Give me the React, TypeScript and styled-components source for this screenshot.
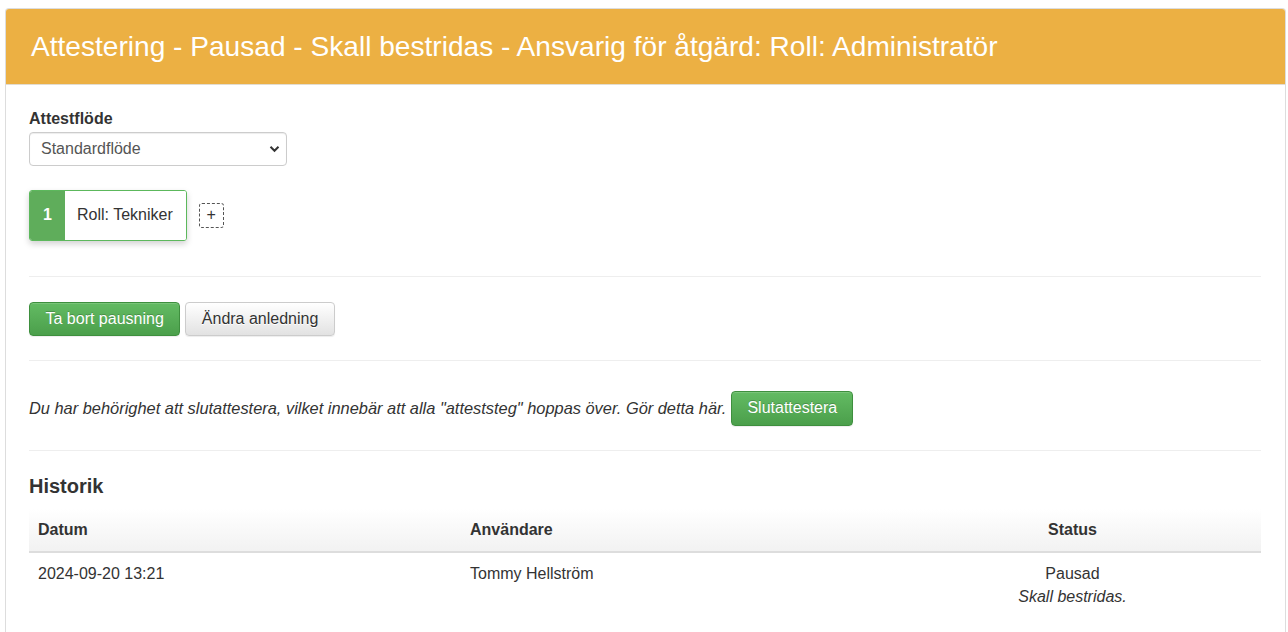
import * as React from 'react';
import styled, { createGlobalStyle } from 'styled-components';

const GlobalStyle = createGlobalStyle`
  html, body {
    margin: 0;
    padding: 0;
    background: #fff;
  }
  body {
    font-family: "Liberation Sans", Arial, Helvetica, sans-serif;
    font-size: 16px;
    line-height: 1.42857;
    color: #333;
  }
  * {
    box-sizing: border-box;
  }
`;

const Page = styled.div`
  padding: 8px 2px 0 5px;
`;

const Panel = styled.section`
  border: 1px solid #ddd;
  border-bottom: none;
  border-radius: 4px 4px 0 0;
  background: #fff;
`;

const PanelHeading = styled.header`
  background: #ecb043;
  border-bottom: 1px solid #e2dcd0;
  border-radius: 3px 3px 0 0;
  padding: 22px 25px 21px;
`;

const Title = styled.h1`
  margin: 0;
  font-size: 28.1px;
  font-weight: 400;
  line-height: 32px;
  color: #fff;
`;

const PanelBody = styled.div`
  padding: 23px 24px 20px 23px;
`;

const Label = styled.label`
  display: block;
  font-weight: 700;
  margin-bottom: 1px;
`;

const SelectWrap = styled.div`
  position: relative;
  width: 258px;
`;

const Select = styled.select`
  appearance: none;
  width: 100%;
  height: 34px;
  padding: 5px 30px 5px 11px;
  font: inherit;
  font-size: 16px;
  color: #555;
  background: #fff;
  border: 1px solid #ccc;
  border-radius: 4px;
  box-shadow: inset 0 1px 1px rgba(0, 0, 0, 0.075);
`;

const Chevron = styled.svg`
  position: absolute;
  right: 7px;
  top: 13px;
  pointer-events: none;
`;

const Steps = styled.div`
  display: flex;
  align-items: center;
  gap: 12px;
  margin-top: 24px;
`;

const StepCard = styled.div`
  display: flex;
  height: 51px;
  border: 1px solid #5cb85c;
  border-radius: 3px;
  overflow: hidden;
  box-shadow: 0 3px 6px rgba(0, 0, 0, 0.18);
`;

const StepNumber = styled.div`
  width: 35px;
  background: #5fad5b;
  color: #fff;
  font-weight: 700;
  display: flex;
  align-items: center;
  justify-content: center;
`;

const StepName = styled.div`
  display: flex;
  align-items: center;
  padding: 0 13px 0 12px;
  background: #fff;
`;

const AddStep = styled.button`
  width: 25px;
  height: 25px;
  padding: 0;
  border: 1px dashed #555;
  border-radius: 3px;
  background: #fff;
  color: #333;
  font: inherit;
  font-size: 16px;
  line-height: 1;
`;

const Divider = styled.hr<{ $top: number; $bottom: number }>`
  border: 0;
  border-top: 1px solid #eee;
  margin: ${(p) => p.$top}px 0 ${(p) => p.$bottom}px;
`;

const ButtonRow = styled.div`
  display: flex;
  gap: 5px;
`;

const Button = styled.button<{ $variant: 'success' | 'default' }>`
  height: 34px;
  padding: 1px 15.5px 0;
  font: inherit;
  font-size: 16px;
  font-style: normal;
  border-radius: 4px;
  cursor: pointer;
  ${(p) =>
    p.$variant === 'success'
      ? `
    color: #fff;
    background: linear-gradient(to bottom, #63bb63 0%, #4b9f4b 100%);
    border: 1px solid #3e8f3e;
    text-shadow: 0 -1px 0 rgba(0, 0, 0, 0.2);
  `
      : `
    color: #333;
    background: linear-gradient(to bottom, #fff 0%, #e2e2e2 100%);
    border: 1px solid #ccc;
    text-shadow: 0 1px 0 #fff;
  `}
  box-shadow: inset 0 1px 0 rgba(255, 255, 255, 0.15), 0 1px 1px rgba(0, 0, 0, 0.075);
`;

const InfoLine = styled.p`
  margin: 0;
  display: flex;
  align-items: center;
  gap: 5px;
  font-style: italic;
  font-size: 16.4px;

  ${Button} {
    height: 35px;
    padding: 1px 15px 0;
    font-size: 16px;
  }
`;

const SectionTitle = styled.h3`
  margin: 0 0 8px;
  font-size: 20px;
  line-height: 30px;
  font-weight: 700;
`;

const Table = styled.table`
  width: 100%;
  border-collapse: collapse;
`;

const Th = styled.th<{ $align?: string; $width?: number }>`
  text-align: ${(p) => p.$align || 'left'};
  width: ${(p) => (p.$width ? `${p.$width}px` : 'auto')};
  padding: 10px 9px 9px;
  font-weight: 700;
  background: linear-gradient(to bottom, #fff 0%, #f2f2f2 100%);
  border-bottom: 2px solid #ddd;
`;

const Td = styled.td<{ $align?: string }>`
  text-align: ${(p) => p.$align || 'left'};
  vertical-align: top;
  padding: 10px 9px 8px;
`;

const Note = styled.em`
  display: block;
`;

export default function App() {
  return (
    <Page>
      <GlobalStyle />
      <Panel>
        <PanelHeading>
          <Title>Attestering - Pausad - Skall bestridas - Ansvarig för åtgärd: Roll: Administratör</Title>
        </PanelHeading>
        <PanelBody>
          <Label htmlFor="flow">Attestflöde</Label>
          <SelectWrap>
            <Select id="flow" defaultValue="std">
              <option value="std">Standardflöde</option>
            </Select>
            <Chevron width="11" height="8" viewBox="0 0 11 8">
              <path d="M1.5 1.8 5.5 5.8 9.5 1.8" fill="none" stroke="#333" strokeWidth="2" />
            </Chevron>
          </SelectWrap>

          <Steps>
            <StepCard>
              <StepNumber>1</StepNumber>
              <StepName>Roll: Tekniker</StepName>
            </StepCard>
            <AddStep>+</AddStep>
          </Steps>

          <Divider $top={35} $bottom={25} />

          <ButtonRow>
            <Button $variant="success">Ta bort pausning</Button>
            <Button $variant="default">Ändra anledning</Button>
          </ButtonRow>

          <Divider $top={24} $bottom={30} />

          <InfoLine>
            Du har behörighet att slutattestera, vilket innebär att alla "atteststeg" hoppas över. Gör detta här.
            <Button $variant="success">Slutattestera</Button>
          </InfoLine>

          <Divider $top={24} $bottom={20} />

          <SectionTitle>Historik</SectionTitle>
          <Table>
            <thead>
              <tr>
                <Th $width={432}>Datum</Th>
                <Th $width={423}>Användare</Th>
                <Th $align="center">Status</Th>
              </tr>
            </thead>
            <tbody>
              <tr>
                <Td>2024-09-20 13:21</Td>
                <Td>Tommy Hellström</Td>
                <Td $align="center">
                  Pausad
                  <Note>Skall bestridas.</Note>
                </Td>
              </tr>
            </tbody>
          </Table>
        </PanelBody>
      </Panel>
    </Page>
  );
}
